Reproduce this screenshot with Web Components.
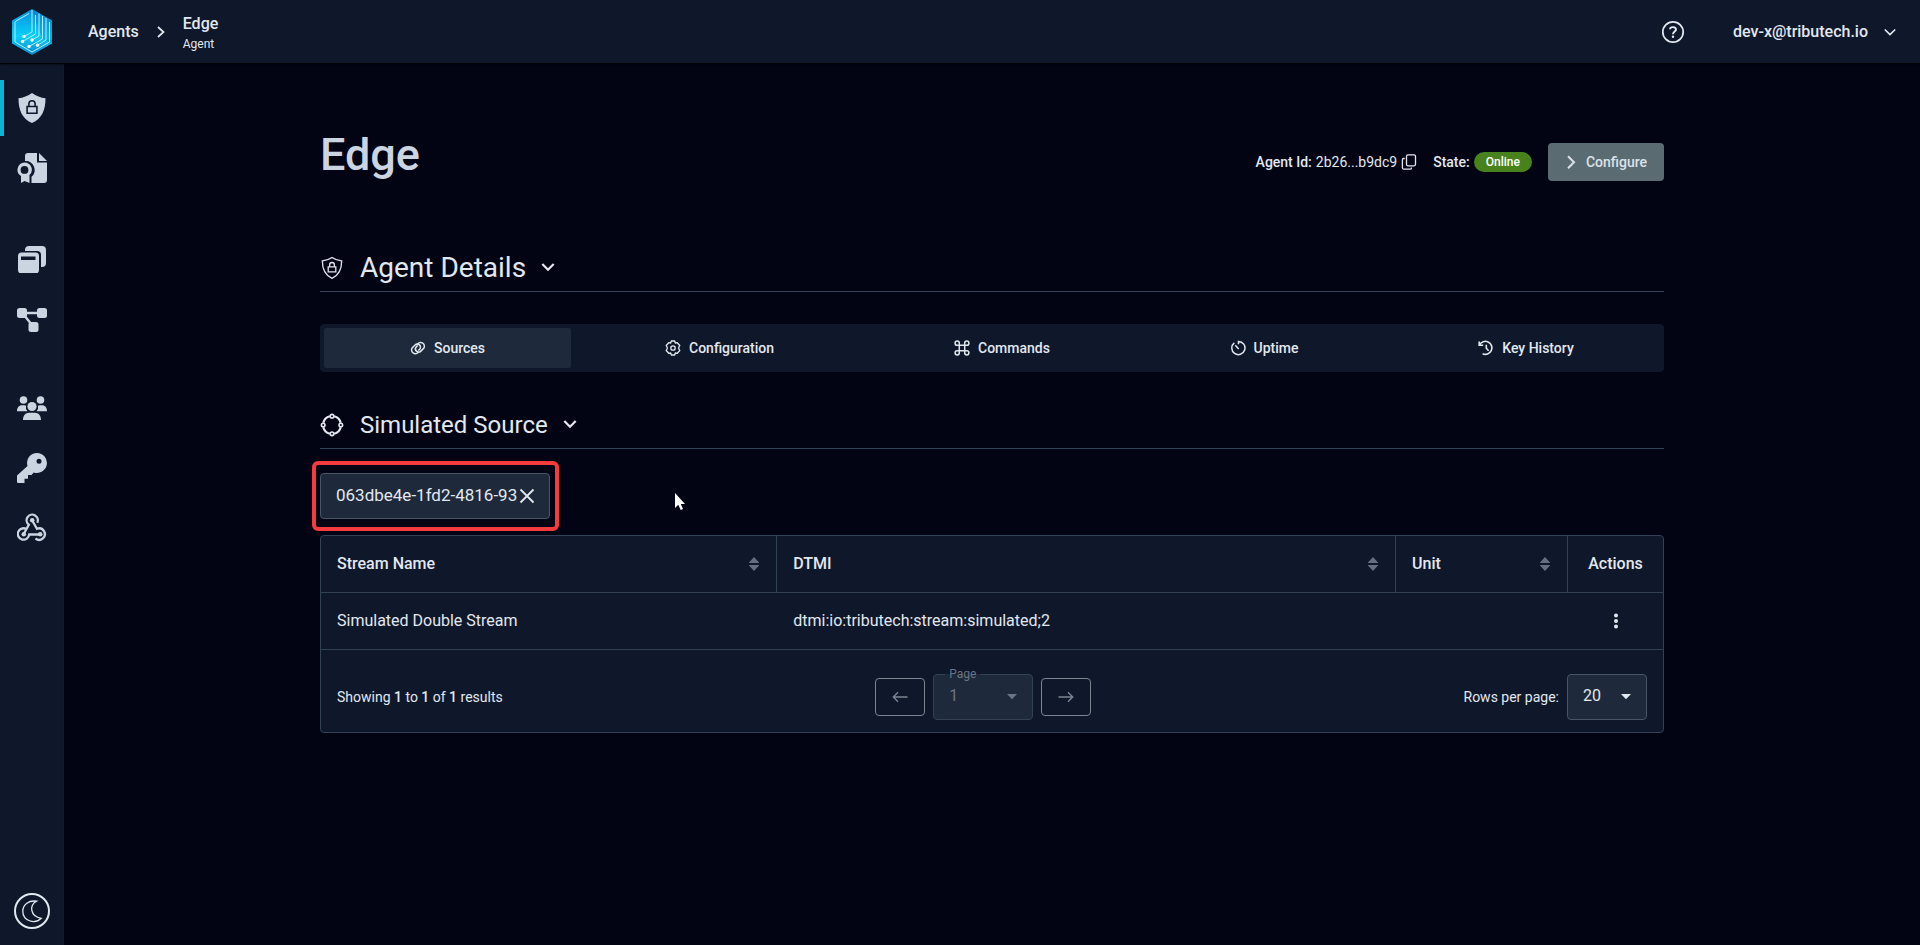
<!DOCTYPE html>
<html lang="en">
<head>
<meta charset="utf-8">
<title>Edge – Agent</title>
<style>
  :root {
    --page: #020414;
    --panel: #0f172a;
    --raised: #1e293b;
    --line: #334155;
    --line-strong: #475569;
    --text: #e2e8f0;
    --muted: #cbd5e1;
    --accent: #06b6d4;
  }
  html, body { margin: 0; }
  body {
    background: var(--page);
    color: var(--text);
    font-family: Roboto, "Liberation Sans", sans-serif;
    font-size: 16px;
    line-height: 24px;
  }
</style>
</head>
<body>
<app-shell></app-shell>
<script>
const ICONS = {
  logo: [40, 46, `<defs><linearGradient id="g" x1="0" y1="0" x2="0" y2="1"><stop offset="0" stop-color="#0a8fdc"/><stop offset=".6" stop-color="#08d0f8"/><stop offset="1" stop-color="#0a86d0"/></linearGradient></defs>
    <path d="M20 0 40 11.500V34.500L20 46 0 34.500V11.500Z" fill="url(#g)"/>
    <path d="M20 0 40 11.500V34.500L30 29Z" fill="#0a7cc4" opacity=".35"/>
    <g fill="none" stroke="#b5efff" stroke-width="1"><path d="M17 4.500 3 12.700V33L20 43 37.500 33V13"/><path d="M20 1V23L12 27.500"/><path d="M23.500 6V25L10.500 32.500"/><path d="M27 4.500V27L20 31"/><path d="M30.500 7V30L17 37.500"/><path d="M34 9V31L26 36"/></g>
    <g fill="#fff"><circle cx="12" cy="27.500" r="1.700"/><circle cx="10.500" cy="32.500" r="1.700"/><circle cx="20" cy="31" r="1.700"/><circle cx="17" cy="37.500" r="1.700"/><circle cx="25.500" cy="36.200" r="1.700"/></g>`],
  shield: [30, 30, `<path fill="currentColor" d="M15 0C11 3 6 4.800 1.500 5.200 1.500 17 5 25.500 15 30 25 25.500 28.500 17 28.500 5.200 24 4.800 19 3 15 0Z"/><g fill="none" stroke="#0f172a" stroke-width="1.600"><path d="M10.100 13.500H19.900V20.200H10.100ZM11.900 13.500V10.800a3.100 3.100 0 0 1 6.200 0V13.500"/></g>`],
  certificate: [30, 30, `<path fill="currentColor" d="M8 8V3a3 3 0 0 1 3-3H20V9.500H30V27a3 3 0 0 1-3 3H14.500V23.800A9 9 0 0 0 8 8ZM22 0 30 8H22Z"/><path fill="currentColor" fill-rule="evenodd" d="M7.500 9.500a7.300 7.300 0 0 1 5 12.600V30L7.500 28 4 30V23A7.300 7.300 0 0 1 7.500 9.500ZM7.500 13a3.900 3.900 0 1 0 0 7.800 3.900 3.900 0 0 0 0-7.800Z"/>`],
  stack: [30, 30, `<path fill="currentColor" d="M8 6V5a4 4 0 0 1 4-4H25a4 4 0 0 1 4 4V18a4 4 0 0 1-4 4H24V10a4 4 0 0 0-4-4Z" transform="translate(0 2)"/><path fill="currentColor" fill-rule="evenodd" transform="translate(0 2)" d="M4.500 7.500H18.500a3.500 3.500 0 0 1 3.500 3.500V25a3.500 3.500 0 0 1-3.500 3.500H4.500A3.500 3.500 0 0 1 1 25V11A3.500 3.500 0 0 1 4.500 7.500ZM4 11.500V15H18.500V11.500Z"/>`],
  nodes: [30, 30, `<g transform="translate(0 2)"><g fill="currentColor"><rect y="3" width="10" height="10" rx="2.500"/><rect x="20" y="3" width="10" height="10" rx="2.500"/><rect x="11.500" y="17" width="10" height="10" rx="2.500"/></g><path stroke="currentColor" stroke-width="2.400" d="M8 8H22M7 10 15 20"/></g>`],
  users: [30, 30, `<g fill="currentColor"><circle cx="6.500" cy="7" r="3.800"/><circle cx="23.500" cy="7" r="3.800"/><circle cx="15" cy="13.500" r="4.600"/><path d="M0 18.300C0 14.500 2 12.300 5 12.300h2.500l1.500.5A6 6 0 0 0 10.500 18.300ZM30 18.300C30 14.500 28 12.300 25 12.300H22.500l-1.500.5A6 6 0 0 1 19.500 18.300ZM6 27C6 22.500 8.500 19.700 12 19.700h6C21.500 19.700 24 22.500 24 27Z"/></g>`],
  key: [30, 30, `<path fill="currentColor" fill-rule="evenodd" d="M20 0a10 10 0 1 1-3.200 19.500L14.500 22H11v3.800H7.500V30H1.200A1.200 1.200 0 0 1 0 28.800V22.600L10.500 13A10 10 0 0 1 20 0ZM22 5.700a2.500 2.500 0 1 0 0 5 2.500 2.500 0 0 0 0-5Z"/>`],
  webhook: [30, 30, `<g fill="none" stroke="currentColor" stroke-width="2.300"><path d="M20.200 9.800A5.600 5.600 0 1 0 11.800 11.700L7 20.500M15.500 8 20 15.800A5.700 5.700 0 1 1 18.500 25.500M9.300 16A5.700 5.700 0 1 0 12.200 21.500H23"/></g><g fill="currentColor"><circle cx="15.200" cy="7.300" r="2.300"/><circle cx="6.800" cy="21.300" r="2.300"/><circle cx="23.200" cy="21.300" r="2.300"/></g>`],
  moon: [36, 36, `<g fill="none" stroke="currentColor"><circle cx="18" cy="18" r="17" stroke-width="2"/><path stroke-width="1.300" d="M22.500 8.200C15.500 12 15.500 23 27.300 25.300 20.500 32 8.800 27.500 8.800 18.200 8.800 11.500 15 7 22.500 8.200Z"/></g>`],
  help: [24, 24, `<g fill="none" stroke="currentColor"><circle cx="12" cy="12" r="10.200" stroke-width="1.700"/><path stroke-width="1.900" d="M9 9.300C9.200 6.300 15 6.500 15 9.500 15 11.500 12 11.700 12 14.200"/></g><circle cx="12" cy="16.700" r="1.200" fill="currentColor"/>`],
  right: [12, 12, `<path fill="none" stroke="currentColor" stroke-width="1.700" d="M3 1 8.500 6 3 11"/>`],
  rightBold: [12, 14, `<path fill="none" stroke="currentColor" stroke-width="2" d="M3 1.300 9 7.300 3 13.300"/>`],
  down: [12, 12, `<path fill="none" stroke="currentColor" stroke-width="1.700" d="M.8 3.500 6 8.500 11.200 3.500"/>`],
  downBold: [14, 12, `<path fill="none" stroke="currentColor" stroke-width="2.200" d="M1.300 2 7 7.700 12.700 2"/>`],
  shieldLine: [24, 24, `<g fill="none" stroke="currentColor" stroke-width="1.300"><path d="M12 1.500C9 3.700 5.500 4.600 2.300 4.800 2.300 13 4.500 19 12 22.400 19.500 19 21.700 13 21.700 4.800 18.500 4.600 15 3.700 12 1.500Z"/><path d="M8.200 10.800H15.800V15.900H8.200ZM9.600 10.800V8.900a2.400 2.400 0 0 1 4.800 0V10.800"/></g>`],
  ring: [24, 24, `<g fill="none" stroke="currentColor" stroke-width="2.200"><path d="M9.800 3.300A9 9 0 0 0 3.300 9.800M3.300 14.200A9 9 0 0 0 9.800 20.700M14.200 20.700A9 9 0 0 0 20.700 14.200M20.700 9.800A9 9 0 0 0 14.200 3.300"/><g stroke-width="1.600"><circle cx="12" cy="3.200" r="1.800"/><circle cx="12" cy="20.800" r="1.800"/><circle cx="3.200" cy="12" r="1.800"/><circle cx="20.800" cy="12" r="1.800"/></g></g>`],
  copy: [16, 16, `<g fill="none" stroke="currentColor" stroke-width="1.300"><rect x="5.500" y=".8" width="9" height="11" rx="1.500"/><path d="M3.800 4.500H2.600a1.200 1.200 0 0 0-1.200 1.200V13.700a1.500 1.500 0 0 0 1.500 1.500H9.200a1.200 1.200 0 0 0 1.200-1.200V13.500"/></g>`],
  link: [16, 16, `<g fill="none" stroke="currentColor" stroke-width="1.500"><path d="M8.600 11.900A3.300 3.300 0 1 1 2.100 8L5.100 5A3.100 3.100 0 0 1 9.600 9.300L8.300 10.600"/><path d="M7.300 4.400A3.300 3.300 0 1 1 13.900 8.100L10.900 11.100A3.100 3.100 0 0 1 6.400 6.700L7.700 5.400"/></g>`],
  gear: [16, 16, `<g fill="none" stroke="currentColor" stroke-width="1.300" stroke-linejoin="round"><path d="M6.300 1H9.700L10.300 3 12.300 2.700 14.800 5.500 13.800 7.300V8.700L14.800 10.500 12.300 13.300 10.300 13 9.700 15H6.300L5.700 13 3.700 13.300 1.200 10.500 2.200 8.700V7.300L1.200 5.500 3.700 2.700 5.700 3Z"/><circle cx="8" cy="8" r="2.200"/></g>`],
  command: [16, 16, `<g fill="none" stroke="currentColor" stroke-width="1.500"><path d="M5.300 5.300H10.700V10.700H5.300ZM5.300 5.300V3.200A2.100 2.100 0 1 0 3.200 5.300ZM10.700 5.300V3.200A2.100 2.100 0 1 1 12.800 5.300ZM5.300 10.700V12.800A2.100 2.100 0 1 1 3.200 10.700ZM10.700 10.700V12.800A2.100 2.100 0 1 0 12.800 10.700Z"/></g>`],
  timer: [16, 16, `<g fill="none" stroke="currentColor" stroke-width="1.500"><path d="M4.300 2.800A6.600 6.600 0 1 0 8.500 1.400V4.300M5.300 5.300 8.700 8.900"/></g>`],
  history: [16, 16, `<g fill="none" stroke="currentColor" stroke-width="1.600"><path d="M1.200 1.500V5.300H5.200M1.500 5A6.500 6.500 0 1 1 4.600 13.700M8.300 4.700V8.300L10.600 10.700"/></g>`],
  close: [16, 16, `<path stroke="currentColor" stroke-width="1.800" d="M1.500 1.500 14.500 14.500M14.500 1.500 1.500 14.500"/>`],
  sort: [12, 16, `<path fill="currentColor" d="M1 6.500 6 1 11 6.500V7H1ZM1 9H11V9.500L6 15 1 9.500Z"/>`],
  caret: [12, 6, `<path fill="currentColor" d="M1 0H11L6 5.300Z"/>`],
  left: [16, 12, `<path fill="none" stroke="currentColor" stroke-width="1.400" d="M15.500 6H1.500M6 1.300 1.300 6 6 10.700"/>`],
  forward: [16, 12, `<path fill="none" stroke="currentColor" stroke-width="1.400" d="M.5 6H14.500M10 1.300 14.700 6 10 10.700"/>`],
  dots: [6, 18, `<g fill="currentColor"><circle cx="3" cy="3.500" r="2"/><circle cx="3" cy="9" r="2"/><circle cx="3" cy="14.500" r="2"/></g>`],
  pointer: [12, 18, `<path fill="#fff" d="M1 0V15L4.300 11.700 6.700 17 9 16 6.800 11H11Z"/>`]
};

const define = (name, css, html) => customElements.define(name, class extends HTMLElement {
  connectedCallback() {
    if (this.shadowRoot) return;
    this.attachShadow({ mode: "open" }).innerHTML =
      `<style>:host{display:block;box-sizing:border-box}*{box-sizing:border-box}button,input,select{font:inherit;color:inherit;margin:0;padding:0;border:0;background:none}a{color:inherit;text-decoration:none}${css}</style>` +
      (typeof html === "function" ? html(this) : html);
  }
});

define("ui-icon", `:host{display:inline-flex;flex:none}svg{display:block}`, el => {
  const [w, h, body] = ICONS[el.getAttribute("name")];
  return `<svg width="${w}" height="${h}" viewBox="0 0 ${w} ${h}" aria-hidden="true">${body}</svg>`;
});

define("app-header", `
  :host{background:var(--panel);height:63px;box-shadow:0 1px 2px #000}
  header{display:flex;align-items:center;height:100%;padding:0 24px 0 12px;font-weight:500}
  .home{display:flex}
  nav{display:flex;align-items:center;margin-left:36px;gap:16px;flex:1}
  .here{display:flex;flex-direction:column}
  .here small{font-size:12px;line-height:16px;font-weight:400}
  button{display:flex;align-items:center}
  .user{gap:16px;margin-left:48px}
`, `<header>
  <a class="home" href="#" aria-label="Home"><ui-icon name="logo"></ui-icon></a>
  <nav aria-label="Breadcrumb"><a href="#">Agents</a><ui-icon name="right"></ui-icon><a class="here" href="#"><span>Edge</span><small>Agent</small></a></nav>
  <button aria-label="Help"><ui-icon name="help"></ui-icon></button>
  <button class="user">dev-x@tributech.io<ui-icon name="down"></ui-icon></button>
</header>`);

define("nav-item", `
  a{display:flex;height:56px;align-items:center;justify-content:center;color:var(--muted);border:0 solid transparent;border-width:0 4px}
  :host([active]) a{border-left-color:var(--accent)}
`, el => `<a href="#" aria-label="${el.getAttribute("label")}"><ui-icon name="${el.getAttribute("icon")}"></ui-icon></a>`);

define("app-sidebar", `
  :host{background:linear-gradient(90deg,var(--panel) 63px,#111a2e 63px)}
  nav{display:flex;flex-direction:column;gap:34px;height:100%;padding:16px 0}
  .group{display:flex;flex-direction:column;gap:4px}
  button{margin-top:auto;align-self:center;display:flex}
`, `<nav aria-label="Main">
  <div class="group"><nav-item active icon="shield" label="Agents"></nav-item><nav-item icon="certificate" label="Certificates"></nav-item></div>
  <div class="group"><nav-item icon="stack" label="Datasets"></nav-item><nav-item icon="nodes" label="Twins"></nav-item></div>
  <div class="group"><nav-item icon="users" label="Users"></nav-item><nav-item icon="key" label="Keys"></nav-item><nav-item icon="webhook" label="Webhooks"></nav-item></div>
  <button aria-label="Dark mode"><ui-icon name="moon"></ui-icon></button>
</nav>`);

define("agent-summary", `
  :host{display:flex;justify-content:space-between;align-items:center}
  h1{margin:0;font-size:45px;line-height:53px;font-weight:500;color:var(--muted)}
  .facts{display:flex;align-items:center;font-size:14px;line-height:20px;padding-top:15px}
  b{font-weight:500;margin-right:4px}
  .copy{display:flex;margin:0 16px 0 4px}
  .pill{background:#47821d;color:#fff;border-radius:10px;padding:0 12px;font-size:12px;font-weight:500}
  .go{display:flex;align-items:center;gap:9px;height:38px;margin-left:16px;padding:0 17px;border-radius:4px;background:#5b6b72;font-weight:500;color:#dbe2ea}
`, `<h1>Edge</h1>
<div class="facts"><b>Agent Id:</b><span>2b26...b9dc9</span><button class="copy" aria-label="Copy agent id"><ui-icon name="copy"></ui-icon></button>
<b>State:</b><span class="pill">Online</span><button class="go"><ui-icon name="rightBold"></ui-icon>Configure</button></div>`);

define("section-heading", `
  :host{border-bottom:1px solid var(--line)}
  h2{display:flex;align-items:center;margin:0;font-weight:400;font-size:24px;line-height:32px;height:46px}
  :host([large]) h2{font-size:28px}
  button{display:flex;align-items:center}
  .mark{margin-right:16px}.arrow{margin-left:15px}
`, el => `<h2><button aria-expanded="true"><ui-icon class="mark" name="${el.getAttribute("icon")}"></ui-icon><slot></slot><ui-icon class="arrow" name="downBold"></ui-icon></button></h2>`);

define("tab-bar", `
  :host{background:var(--panel);border-radius:4px;padding:4px}
  div{display:grid;grid-template-columns:247fr 297fr 268fr 256fr 268fr}
  button{display:flex;align-items:center;justify-content:center;gap:8px;height:40px;font-size:14px;font-weight:500;border-radius:2px}
  [aria-selected=true]{background:var(--raised)}
`, `<div role="tablist">
  <button role="tab" aria-selected="true"><ui-icon name="link"></ui-icon>Sources</button>
  <button role="tab"><ui-icon name="gear"></ui-icon>Configuration</button>
  <button role="tab"><ui-icon name="command"></ui-icon>Commands</button>
  <button role="tab"><ui-icon name="timer"></ui-icon>Uptime</button>
  <button role="tab"><ui-icon name="history"></ui-icon>Key History</button>
</div>`);

define("stream-filter", `
  :host{position:relative;width:230px}
  .field{display:flex;align-items:center;height:46px;padding:0 14px 0 15px;border:1px solid var(--line-strong);border-radius:4px;background:var(--raised)}
  input{flex:1;min-width:0;outline:0;font-size:17px;padding-bottom:2px}
  button{display:flex}
  .highlight{position:absolute;inset:-12px -9px -12px -8px;border:4px solid #f43b3d;border-radius:6px;pointer-events:none}
`, `<div class="field"><input type="text" aria-label="Filter streams" value="063dbe4e-1fd2-4816-93"><button aria-label="Clear filter"><ui-icon name="close"></ui-icon></button></div><div class="highlight"></div>`);

define("select-box", `
  :host{position:relative;width:80px}
  select{appearance:none;display:block;width:100%;height:46px;padding:0 32px 2px 15px;border:1px solid var(--line-strong);border-radius:4px;background:var(--raised);opacity:1}
  .caret{position:absolute;right:15px;top:20px;pointer-events:none}
  label{position:absolute;left:12px;top:-8px;padding:0 4px;font-size:12px;line-height:16px;color:#6b7685;background:linear-gradient(var(--panel) 8px,var(--raised) 8px)}
  label:empty{display:none}
  :host([disabled]){width:100px;color:#6b7685}
  :host([disabled]) select{border-color:var(--line);color:#6b7685}
`, el => `<select id="s" aria-label="${el.getAttribute("hint")}" ${el.hasAttribute("disabled") ? "disabled" : ""}><option>${el.getAttribute("value")}</option></select><label for="s">${el.getAttribute("label") || ""}</label><ui-icon class="caret" name="caret"></ui-icon>`);

define("stream-table", `
  :host{border:1px solid var(--line);border-radius:4px;background:var(--panel)}
  table{width:100%;table-layout:fixed;border-collapse:separate;border-spacing:0}
  th,td{height:57px;padding:0 16px;border-bottom:1px solid var(--line);text-align:left;font-weight:400}
  th{font-weight:500;border-right:1px solid var(--line)}
  th:last-child{border-right:0}
  th:last-child,td:last-child{text-align:center}
  th button{display:flex;width:100%;justify-content:space-between;align-items:center;font-weight:500}
  th ui-icon{color:#64707f}
  .a{width:34%}.c{width:172px}.d{width:95px}
  footer{display:flex;justify-content:space-between;align-items:center;padding:24px 16px 12px;font-size:14px;line-height:20px}
  b{font-weight:500}
  .pages{display:flex;align-items:center;gap:8px;font-size:16px}
  .pages button{display:flex;align-items:center;justify-content:center;width:50px;height:38px;border:1px solid #7b8592;border-radius:4px;color:#7b8592}
  .rows{display:flex;align-items:center;gap:8px}
  .rows select-box{font-size:16px}
  td button{display:flex;margin:0 auto;padding:8px 12px}
`, `<table>
  <thead><tr>
    <th class="a"><button>Stream Name<ui-icon name="sort"></ui-icon></button></th>
    <th><button>DTMI<ui-icon name="sort"></ui-icon></button></th>
    <th class="c"><button>Unit<ui-icon name="sort"></ui-icon></button></th>
    <th class="d">Actions</th></tr></thead>
  <tbody><tr><td>Simulated Double Stream</td><td>dtmi:io:tributech:stream:simulated;2</td><td></td><td><button aria-label="Row actions"><ui-icon name="dots"></ui-icon></button></td></tr></tbody>
</table>
<footer>
  <span>Showing <b>1</b> to <b>1</b> of <b>1</b> results</span>
  <div class="pages"><button disabled aria-label="Previous page"><ui-icon name="left"></ui-icon></button><select-box disabled label="Page" hint="Page" value="1"></select-box><button disabled aria-label="Next page"><ui-icon name="forward"></ui-icon></button></div>
  <div class="rows"><span>Rows per page:</span><select-box hint="Rows per page" value="20"></select-box></div>
</footer>`);

define("app-shell", `
  :host{display:grid;grid-template:auto 1fr / 64px minmax(0,1fr);min-height:100vh;position:relative}
  app-header{grid-column:1 / -1;margin-bottom:1px;z-index:1}
  main{width:100%;max-width:1408px;margin:0 auto;padding:64px 32px}
  .details{margin-top:64px}
  tab-bar{margin-top:32px}
  .source{margin-top:30px}
  stream-filter{margin-top:24px}
  stream-table{margin-top:16px}
  .pointer{position:absolute;left:674px;top:493px}
`, `<app-header></app-header><app-sidebar></app-sidebar>
<main>
  <agent-summary></agent-summary>
  <section-heading class="details" large icon="shieldLine">Agent Details</section-heading>
  <tab-bar></tab-bar>
  <section-heading class="source" icon="ring">Simulated Source</section-heading>
  <stream-filter></stream-filter>
  <stream-table></stream-table>
</main>
<ui-icon class="pointer" name="pointer"></ui-icon>`);
</script>
</body>
</html>
